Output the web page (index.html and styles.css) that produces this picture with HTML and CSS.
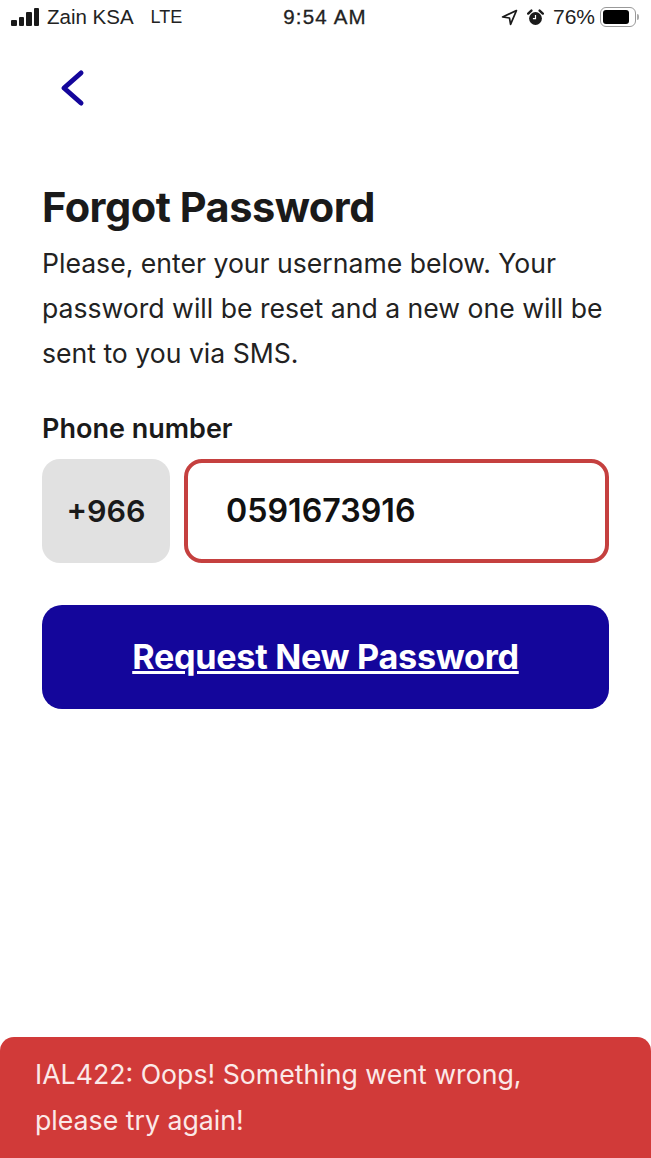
FILE: index.html
```html
<!DOCTYPE html>
<html lang="en">
<head>
    <meta charset="UTF-8">
    <title>Forgot Password</title>
    <link rel="stylesheet" href="styles.css">
</head>
<body>

<div class="screen">
    <div class="status-bar">
        <div class="status-left">
            <span class="signal"><i class="b1"></i><i class="b2"></i><i class="b3"></i><i class="b4"></i></span>
            <span class="carrier">Zain KSA</span>
            <span class="network">LTE</span>
        </div>
        <div class="status-time">9:54 AM</div>
        <div class="status-right">
            <svg class="icon-location" width="17" height="17" viewBox="0 0 16 16"><path d="M14.5 1.5 L1.5 7.5 L8 8.5 L9 14.5 Z" fill="none" stroke="#1a1a1a" stroke-width="1.6" stroke-linejoin="round"/></svg>
            <svg class="icon-alarm" width="17" height="17" viewBox="0 0 17 17"><circle cx="8.5" cy="9.5" r="6.4" fill="#1a1a1a"/><path d="M8.5 6v3.7h-2.6" fill="none" stroke="#fff" stroke-width="1.2"/><path d="M1.2 4.6 L4.4 1.6 M15.8 4.6 L12.6 1.6" stroke="#1a1a1a" stroke-width="2.4" stroke-linecap="round"/></svg>
            <span class="battery-pct">76%</span>
            <span class="battery"><span class="battery-fill"></span></span>
            <span class="battery-tip"></span>
        </div>
    </div>

    <a class="back" href="#">
        <svg width="26" height="38" viewBox="0 0 26 38"><path d="M21 4 L4 19 L21 34" fill="none" stroke="#14069b" stroke-width="5" stroke-linecap="round" stroke-linejoin="round"/></svg>
    </a>

    <div class="content">
        <h1>Forgot Password</h1>
        <p class="intro">Please, enter your username below. Your password will be reset and a new one will be sent to you via SMS.</p>

        <label class="field-label" for="phone">Phone number</label>
        <div class="phone-row">
            <div class="prefix">+966</div>
            <input class="phone-input" id="phone" type="text" value="0591673916">
        </div>

        <button class="submit" type="button">Request New Password</button>
    </div>

    <div class="toast">IAL422: Oops! Something went wrong, please try again!</div>
</div>

</body>
</html>
```

FILE: styles.css
```css
* {
    box-sizing: border-box;
}
body {
    margin: 0;
    background: #fff;
    font-family: Inter, "Liberation Sans", sans-serif;
    color: #1a1a1a;
}
.screen {
    width: 651px;
    height: 1158px;
    display: flex;
    flex-direction: column;
    overflow: hidden;
}
.status-bar {
    height: 36px;
    padding: 0 12px 2px 11px;
    display: grid;
    grid-template-columns: 1fr auto 1fr;
    align-items: center;
    font-family: "Liberation Sans", sans-serif;
    font-size: 20.5px;
    color: #222;
}
.status-left {
    display: flex;
    align-items: center;
}
.signal {
    display: flex;
    align-items: flex-end;
    gap: 2px;
    height: 18px;
    margin-right: 8px;
}
.signal i {
    width: 5.5px;
    background: #1a1a1a;
    border-radius: 1px;
}
.b1 { height: 6px; }
.b2 { height: 9px; }
.b3 { height: 14px; }
.b4 { height: 18px; }
.network {
    margin-left: 17px;
    font-size: 18px;
}
.status-time {
    font-size: 20.5px;
    letter-spacing: 1.2px;
    -webkit-text-stroke: 0.3px #222;
}
.status-right {
    display: flex;
    align-items: center;
    justify-content: flex-end;
}
.icon-location {
    margin-right: 9px;
}
.icon-alarm {
    margin-right: 9px;
}
.battery-pct {
    margin-right: 5px;
    font-size: 21px;
}
.battery {
    width: 36px;
    height: 20px;
    padding: 2px;
    border: 1.5px solid #999;
    border-radius: 6px;
}
.battery-fill {
    display: block;
    width: 26px;
    height: 100%;
    background: #000;
    border-radius: 3px;
}
.battery-tip {
    width: 2px;
    height: 6px;
    margin-left: 1px;
    background: #aaa;
    border-radius: 0 2px 2px 0;
}
.back {
    display: block;
    margin: 33px 0 0 60px;
    height: 38px;
}
.content {
    padding: 0 42px;
    margin-top: 76px;
}
h1 {
    margin: 0;
    font-size: 41.5px;
    line-height: 48px;
    font-weight: 700;
    letter-spacing: -0.5px;
}
.intro {
    margin: 10px 0 0;
    font-size: 26.6px;
    line-height: 45px;
    color: #222;
}
.field-label {
    display: block;
    margin-top: 36px;
    font-size: 27px;
    line-height: 34px;
    font-weight: 600;
}
.phone-row {
    display: flex;
    gap: 14px;
    margin-top: 12.5px;
}
.prefix {
    width: 128px;
    height: 104px;
    display: flex;
    align-items: center;
    justify-content: center;
    background: #e1e1e1;
    border-radius: 18px;
    font-size: 30.5px;
    font-weight: 600;
}
.phone-input {
    flex: 1;
    min-width: 0;
    height: 104px;
    padding: 0 38px;
    border: 4px solid #c5403f;
    border-radius: 18px;
    background: #fff;
    font-family: inherit;
    font-size: 32.2px;
    font-weight: 600;
    color: #111;
    outline: none;
}
.submit {
    display: block;
    width: 100%;
    height: 104px;
    margin-top: 42px;
    border: none;
    border-radius: 20px;
    background: #14069b;
    color: #fff;
    font-family: inherit;
    font-size: 34.2px;
    font-weight: 700;
    text-decoration: underline;
    letter-spacing: -0.3px;
    cursor: pointer;
}
.toast {
    margin-top: auto;
    height: 121px;
    padding: 15px 100px 0 35px;
    background: #d13a39;
    border-radius: 14px 14px 0 0;
    color: #fbe9e8;
    font-size: 26.7px;
    line-height: 45.5px;
}
```
